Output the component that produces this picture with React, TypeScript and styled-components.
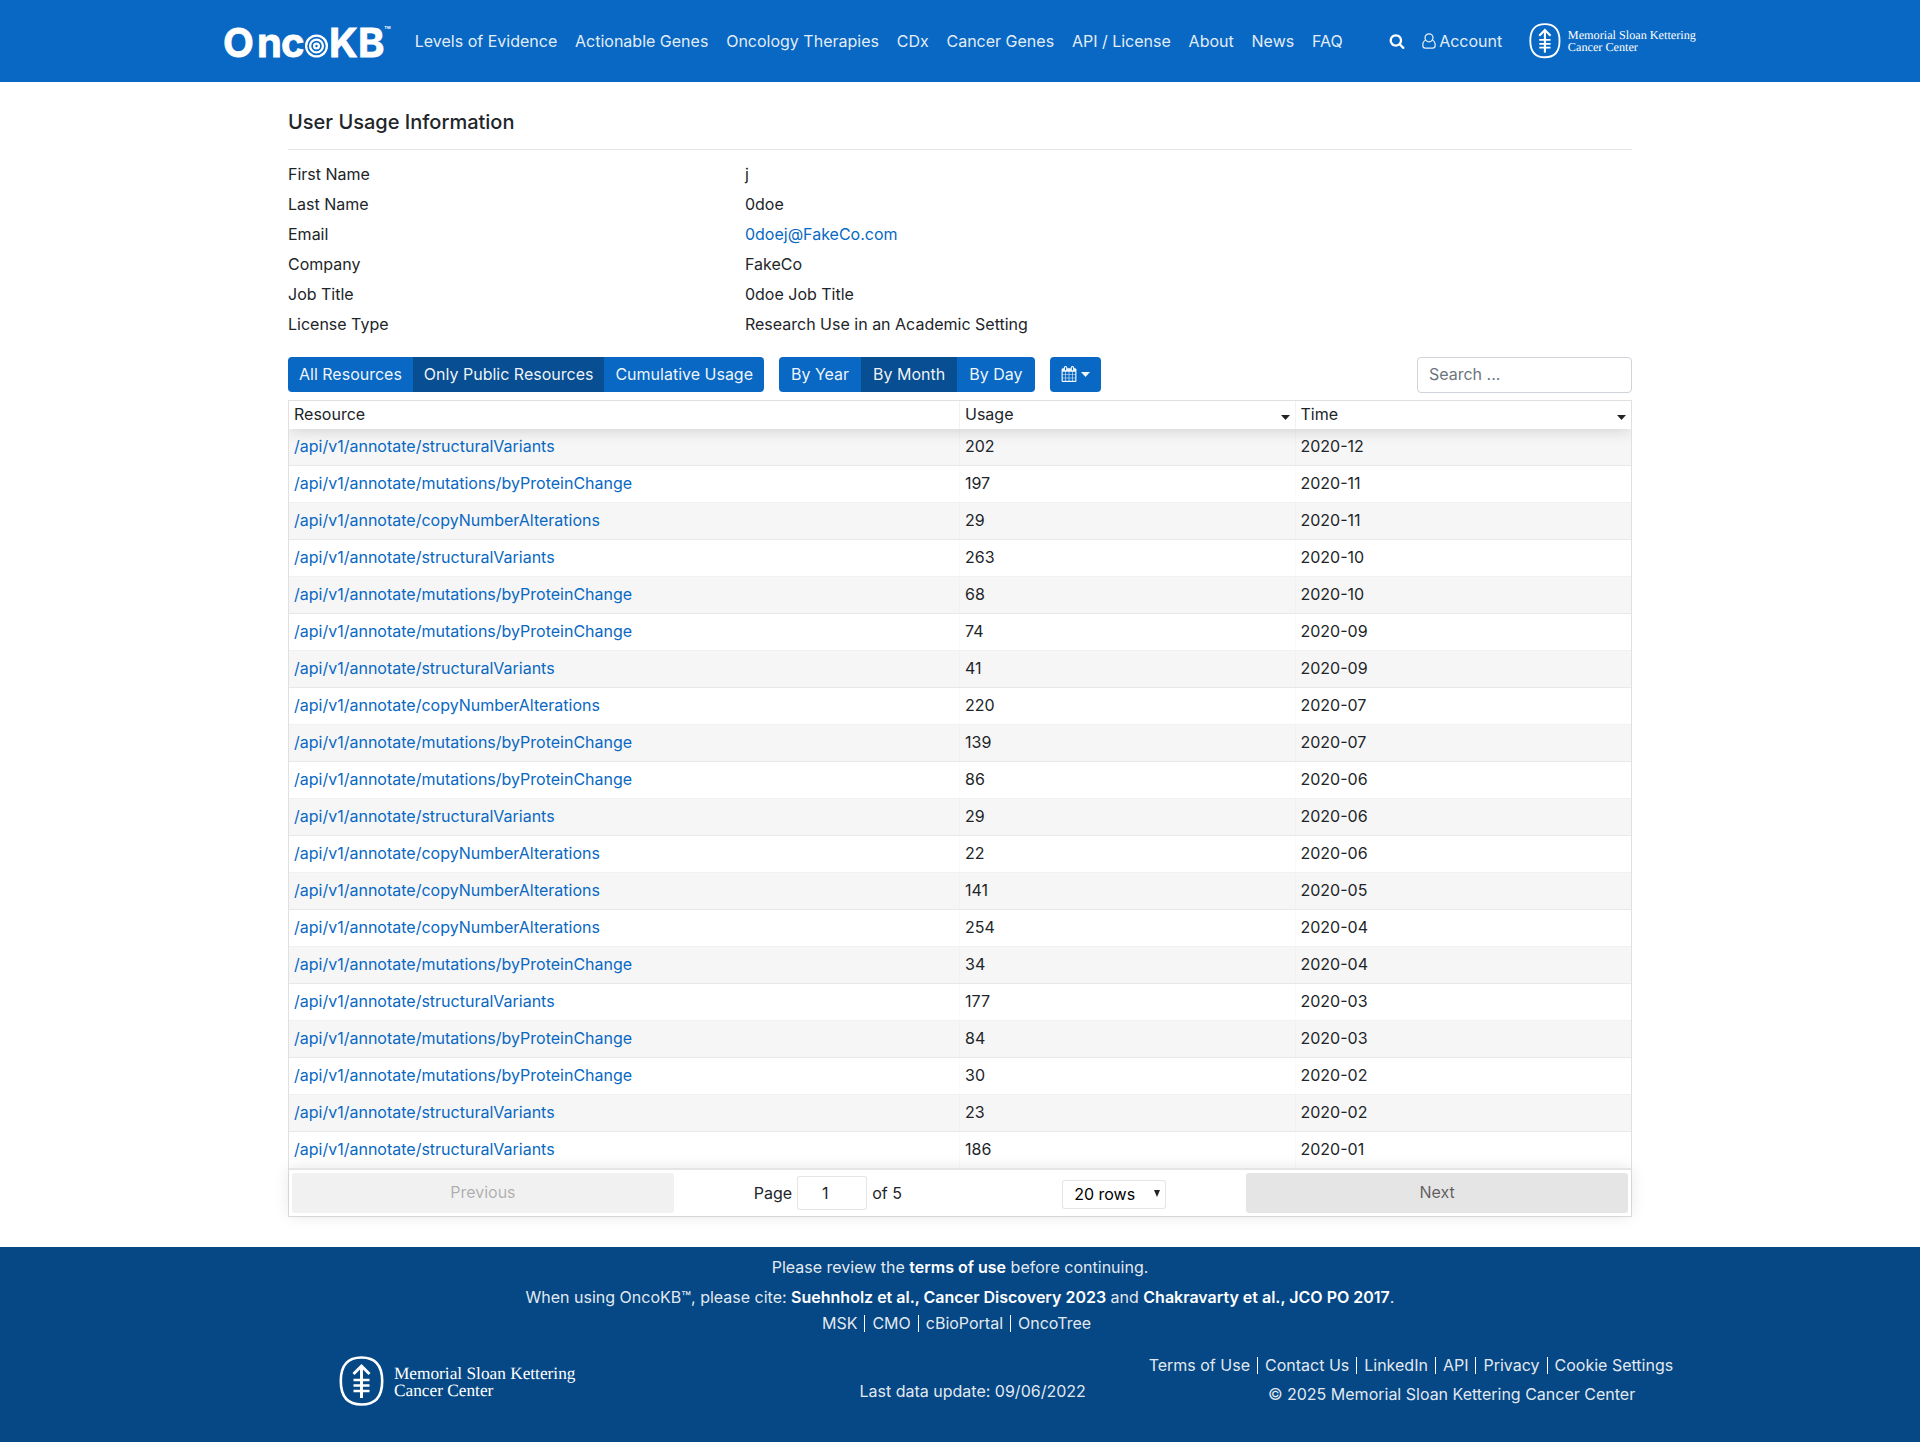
import React, { useState } from 'react';
import styled, { createGlobalStyle } from 'styled-components';

const BLUE = '#0968c3';
const BLUE_DARK = '#084e92';
const FOOTER = '#064885';
const INK = '#212529';

const GlobalStyle = createGlobalStyle`
  *, *::before, *::after { box-sizing: border-box; }
  body {
    margin: 0;
    background: #fff;
    color: ${INK};
    font-family: Inter, "Liberation Sans", sans-serif;
    font-size: 16px;
    line-height: 24px;
  }
  button, input, select { font: inherit; color: inherit; }
  a { color: ${BLUE}; text-decoration: none; }
`;

const Page = styled.div`
  display: flex;
  flex-direction: column;
  min-height: 100vh;
`;

const Header = styled.header`
  background: ${BLUE};
  color: #fff;
`;

const HeaderInner = styled.div`
  display: flex;
  align-items: center;
  width: 77%;
  height: 82px;
  margin: 0 auto;
  padding: 0 2px;
`;

const HomeLink = styled.a`
  display: flex;
  margin-right: 20px;
`;

const Nav = styled.nav`
  display: flex;
  flex: 0 1 928px;
  justify-content: space-between;
  a { color: rgba(255, 255, 255, 0.9); white-space: nowrap; }
`;

const Tools = styled.div`
  display: flex;
  flex: 1;
  align-items: center;
  justify-content: flex-end;
  a { display: flex; align-items: center; gap: 2px; color: rgba(255, 255, 255, 0.9); }
`;

const IconButton = styled.button`
  display: flex;
  padding: 0;
  margin-right: 16px;
  border: 0;
  background: none;
  color: #fff;
`;

const MskLink = styled.a`
  margin-left: 27px;
`;

const Main = styled.main`
  width: 70%;
  margin: 0 auto;
  padding: 28px 0 30px;
`;

const Title = styled.h1`
  margin: 0;
  padding-bottom: 15px;
  border-bottom: 1px solid #e5e5e5;
  font-size: 20px;
  font-weight: 500;
  line-height: 24px;
`;

const Details = styled.dl`
  display: grid;
  grid-template-columns: 34% 1fr;
  row-gap: 6px;
  margin: 12px 0 21px;
  dt, dd { margin: 0; }
`;

const Toolbar = styled.div`
  display: flex;
  align-items: flex-start;
  gap: 15px;
  margin-bottom: 7px;
`;

const ButtonGroup = styled.div`
  display: flex;
  overflow: hidden;
  border-radius: 4px;
`;

const ToolButton = styled.button<{ $active?: boolean; $tight?: boolean }>`
  display: flex;
  align-items: center;
  gap: 4px;
  height: 35px;
  padding: 0 ${(p) => (p.$tight ? 11 : 12)}px 1px;
  border: 0;
  background: ${(p) => (p.$active ? BLUE_DARK : BLUE)};
  color: rgba(255, 255, 255, 0.95);
  white-space: nowrap;
`;

const SearchBox = styled.input`
  width: 16%;
  height: 36px;
  margin-left: auto;
  padding: 0 11px 2px;
  border: 1px solid #ced4da;
  border-radius: 4px;
  background: #fff;
  &::placeholder { color: #6c757d; opacity: 1; }
`;

const TableCard = styled.div`
  border: 1px solid rgba(0, 0, 0, 0.12);
`;

const TableClip = styled.div`
  overflow: hidden;
`;

const Table = styled.table`
  width: 100%;
  table-layout: fixed;
  border-collapse: separate;
  border-spacing: 0;
  thead {
    position: relative;
    z-index: 1;
    background: #fff;
    box-shadow: 0 2px 15px 0 rgba(0, 0, 0, 0.15);
  }
  tbody tr:nth-child(odd) { background: #f6f6f6; }
  tbody tr:last-child td { border-bottom: 0; height: 36px; }
`;

const HeadCell = styled.th<{ $width: string }>`
  width: ${(p) => p.$width};
  height: 28px;
  padding: 0 5px;
  border-right: 1px solid rgba(0, 0, 0, 0.05);
  font-weight: 400;
  text-align: left;
  vertical-align: top;
  &:last-child { border-right: 0; }
`;

const HeadLabel = styled.span`
  display: flex;
  align-items: center;
  justify-content: space-between;
  line-height: 26px;
  svg { margin-top: 6px; }
`;

const Cell = styled.td`
  height: 37px;
  padding: 0 5px 3px;
  border-right: 1px solid rgba(0, 0, 0, 0.02);
  border-bottom: 1px solid rgba(0, 0, 0, 0.05);
  &:last-child { border-right: 0; }
`;

const Pagination = styled.div`
  position: relative;
  z-index: 1;
  display: grid;
  grid-template-columns: 2fr 3fr 2fr;
  align-items: center;
  padding: 3px;
  border-top: 2px solid rgba(0, 0, 0, 0.1);
  background: #fff;
  box-shadow: 0 0 15px 0 rgba(0, 0, 0, 0.1);
`;

const PageButton = styled.button`
  height: 40px;
  padding: 0 0 2px;
  border: 0;
  border-radius: 3px;
  background: rgba(0, 0, 0, 0.1);
  color: rgba(0, 0, 0, 0.6);
  &:disabled { opacity: 0.5; }
`;

const PageCenter = styled.div`
  display: flex;
  align-items: center;
  justify-content: space-around;
`;

const PageLabel = styled.label`
  display: flex;
  align-items: center;
  gap: 5px;
`;

const PageInput = styled.input`
  width: 70px;
  height: 34px;
  padding: 0 14px 0 0;
  border: 1px solid rgba(0, 0, 0, 0.1);
  border-radius: 3px;
  text-align: center;
`;

const SelectWrap = styled.span`
  position: relative;
  display: inline-flex;
  margin-top: 2px;
  svg { position: absolute; right: 6px; top: 10px; pointer-events: none; }
`;

const RowSelect = styled.select`
  width: 104px;
  height: 29px;
  padding: 0 11px;
  border: 1px solid rgba(0, 0, 0, 0.1);
  border-radius: 3px;
  appearance: none;
  background: #fff;
  color: #000;
`;

const Footer = styled.footer`
  flex: 1;
  padding-top: 8px;
  background: ${FOOTER};
  color: rgba(255, 255, 255, 0.9);
  text-align: center;
  a { color: inherit; }
`;

const FooterLine = styled.p`
  margin: 0 0 6px;
  strong { color: #fff; font-weight: 600; }
`;

const LinkList = styled.div`
  display: flex;
  align-items: center;
  justify-content: center;
  white-space: nowrap;
  a { padding: 0 7px; line-height: 17px; border-left: 1px solid #fff; }
  a:first-child { border-left: 0; padding-left: 0; }
`;

const FooterGrid = styled.div`
  display: grid;
  grid-template-columns: 13fr 8fr auto;
  align-items: start;
  width: 77%;
  margin: 0 auto;
  padding: 17px 19px 28px 4px;
`;

const FooterLogo = styled.a`
  display: flex;
  justify-content: flex-start;
  padding: 7px 0 0 20%;
`;

const Updated = styled.div`
  padding-top: 30px;
`;

const FooterLinks = styled.div`
  display: flex;
  flex-direction: column;
  align-items: flex-end;
  gap: 8px;
  padding-top: 8px;
`;

const Copyright = styled.div`
  padding-right: 45px;
`;

const OncoKbLogo = () => (
  <svg width="172" height="50" viewBox="0 0 172 50" fill="#fff" role="img" aria-label="OncoKB">
    <g fontFamily="Inter, sans-serif" fontWeight="700" fontSize="40" stroke="#fff" strokeWidth="0.8">
      <text x="0" y="41">O</text>
      <text x="34" y="41">n</text>
      <text x="58" y="41">c</text>
      <text x="106" y="41">K</text>
      <text x="135" y="41">B</text>
    </g>
    <circle cx="93.500" cy="30" r="11.500" />
    <g fill="none" stroke={BLUE} strokeWidth="1.700">
      <circle cx="93.500" cy="30" r="8.400" />
      <circle cx="93.500" cy="30" r="4.400" />
    </g>
    <circle cx="93.500" cy="30" r="1.200" fill={BLUE} />
    <text x="161" y="18" fontFamily="Inter, sans-serif" fontSize="11" fontWeight="500">™</text>
  </svg>
);

const MskLogo = ({ width, label }: { width: number; label: string }) => (
  <svg width={width} viewBox="0 0 238 50" fill="none" role="img" aria-label={label}>
    <path
      d="M22.500 1.500C36 1.500 43.200 9 43.200 25S36 48.500 22.500 48.500 1.800 41 1.800 25 9 1.500 22.500 1.500z"
      stroke="#fff"
      strokeWidth="2.600"
    />
    <g stroke="#fff" strokeWidth="3">
      <path d="M22.500 10V42" />
      <path d="M14.500 18l8-8 8 8" />
      <path d="M14.500 24h16M14.500 29.500h16M14.500 35h16" strokeWidth="2.400" />
    </g>
    <g fill="#fff" fontFamily='"Liberation Serif", serif' fontSize="17.300" textRendering="geometricPrecision">
      <text x="55" y="23">Memorial Sloan Kettering</text>
      <text x="55" y="40">Cancer Center</text>
    </g>
  </svg>
);

const SearchIcon = () => (
  <svg width="16" height="16" viewBox="0 0 1792 1792" fill="currentColor" aria-hidden="true">
    <path d="M1216 832q0-185-131.500-316.500t-316.500-131.500-316.500 131.500-131.500 316.500 131.500 316.500 316.500 131.500 316.500-131.500 131.500-316.500zm512 832q0 52-38 90t-90 38q-54 0-90-38l-343-342q-179 124-399 124-143 0-273.500-55.500t-225-150-150-225-55.500-273.500 55.500-273.500 150-225 225-150 273.500-55.500 273.500 55.500 225 150 150 225 55.500 273.500q0 220-124 399l343 343q37 37 37 90z" />
  </svg>
);

const UserIcon = () => (
  <svg width="16" height="16" viewBox="0 0 16 16" fill="none" stroke="currentColor" strokeWidth="1.200" aria-hidden="true">
    <circle cx="8" cy="4.800" r="4" />
    <path d="M4.600 7.200C2.600 7.800 1.800 9.800 1.800 12.200c0 1.900 1 3 2.600 3h7.200c1.600 0 2.600-1.100 2.600-3 0-2.400-.8-4.400-2.800-5" />
  </svg>
);

const CalendarIcon = () => (
  <svg width="16" height="16" viewBox="0 0 1792 1792" fill="currentColor" aria-hidden="true">
    <path d="M192 1664h288v-288h-288v288zm352 0h320v-288h-320v288zm-352-352h288v-320h-288v320zm352 0h320v-320h-320v320zm-352-384h288v-288h-288v288zm736 736h320v-288h-320v288zm-384-736h320v-288h-320v288zm768 736h288v-288h-288v288zm-384-352h320v-320h-320v320zm-352-864v-288q0-13-9.500-22.500t-22.500-9.500h-64q-13 0-22.500 9.500t-9.500 22.500v288q0 13 9.500 22.500t22.500 9.500h64q13 0 22.500-9.500t9.500-22.500zm736 864h288v-320h-288v320zm-384-384h320v-288h-320v288zm384 0h288v-288h-288v288zm32-480v-288q0-13-9.500-22.500t-22.500-9.500h-64q-13 0-22.500 9.500t-9.500 22.500v288q0 13 9.500 22.500t22.500 9.500h64q13 0 22.500-9.500t9.500-22.500zm384-64v1280q0 52-38 90t-90 38h-1408q-52 0-90-38t-38-90v-1280q0-52 38-90t90-38h128v-96q0-66 47-113t113-47h64q66 0 113 47t47 113v96h384v-96q0-66 47-113t113-47h64q66 0 113 47t47 113v96h128q52 0 90 38t38 90z" />
  </svg>
);

const Caret = ({ width = 9, height = 5 }: { width?: number; height?: number }) => (
  <svg width={width} height={height} viewBox="0 0 10 5" preserveAspectRatio="none" fill="currentColor" aria-hidden="true">
    <path d="M0 0h10L5 5z" />
  </svg>
);

const NAV = ['Levels of Evidence', 'Actionable Genes', 'Oncology Therapies', 'CDx', 'Cancer Genes', 'API / License', 'About', 'News', 'FAQ'];

const DETAILS: [string, React.ReactNode][] = [
  ['First Name', 'j'],
  ['Last Name', '0doe'],
  ['Email', <a href="mailto:0doej@FakeCo.com">0doej@FakeCo.com</a>],
  ['Company', 'FakeCo'],
  ['Job Title', '0doe Job Title'],
  ['License Type', 'Research Use in an Academic Setting'],
];

const SV = '/api/v1/annotate/structuralVariants';
const PC = '/api/v1/annotate/mutations/byProteinChange';
const CN = '/api/v1/annotate/copyNumberAlterations';

const ROWS: [string, number, string][] = [
  [SV, 202, '2020-12'],
  [PC, 197, '2020-11'],
  [CN, 29, '2020-11'],
  [SV, 263, '2020-10'],
  [PC, 68, '2020-10'],
  [PC, 74, '2020-09'],
  [SV, 41, '2020-09'],
  [CN, 220, '2020-07'],
  [PC, 139, '2020-07'],
  [PC, 86, '2020-06'],
  [SV, 29, '2020-06'],
  [CN, 22, '2020-06'],
  [CN, 141, '2020-05'],
  [CN, 254, '2020-04'],
  [PC, 34, '2020-04'],
  [SV, 177, '2020-03'],
  [PC, 84, '2020-03'],
  [PC, 30, '2020-02'],
  [SV, 23, '2020-02'],
  [SV, 186, '2020-01'],
];

const SCOPES = ['All Resources', 'Only Public Resources', 'Cumulative Usage'];
const PERIODS = ['By Year', 'By Month', 'By Day'];

export default function App() {
  const [scope, setScope] = useState(SCOPES[1]);
  const [period, setPeriod] = useState(PERIODS[1]);

  return (
    <Page>
      <GlobalStyle />
      <Header>
        <HeaderInner>
          <HomeLink href="#"><OncoKbLogo /></HomeLink>
          <Nav>
            {NAV.map((item) => <a key={item} href="#">{item}</a>)}
          </Nav>
          <Tools>
            <IconButton aria-label="Search"><SearchIcon /></IconButton>
            <a href="#"><UserIcon />Account</a>
            <MskLink href="#"><MskLogo width={168} label="Memorial Sloan Kettering Cancer Center" /></MskLink>
          </Tools>
        </HeaderInner>
      </Header>

      <Main>
        <Title>User Usage Information</Title>
        <Details>
          {DETAILS.map(([label, value]) => (
            <React.Fragment key={label}>
              <dt>{label}</dt>
              <dd>{value}</dd>
            </React.Fragment>
          ))}
        </Details>

        <Toolbar>
          <ButtonGroup>
            {SCOPES.map((s) => (
              <ToolButton key={s} $tight $active={s === scope} onClick={() => setScope(s)}>{s}</ToolButton>
            ))}
          </ButtonGroup>
          <ButtonGroup>
            {PERIODS.map((p) => (
              <ToolButton key={p} $active={p === period} onClick={() => setPeriod(p)}>{p}</ToolButton>
            ))}
          </ButtonGroup>
          <ButtonGroup>
            <ToolButton $tight aria-label="Choose dates"><CalendarIcon /><Caret /></ToolButton>
          </ButtonGroup>
          <SearchBox type="text" placeholder="Search ..." aria-label="Search" />
        </Toolbar>

        <TableCard>
          <TableClip>
            <Table>
              <thead>
                <tr>
                  <HeadCell $width="50%"><HeadLabel>Resource</HeadLabel></HeadCell>
                  <HeadCell $width="25%"><HeadLabel>Usage<Caret /></HeadLabel></HeadCell>
                  <HeadCell $width="25%"><HeadLabel>Time<Caret /></HeadLabel></HeadCell>
                </tr>
              </thead>
              <tbody>
                {ROWS.map(([resource, usage, time], i) => (
                  <tr key={i}>
                    <Cell><a href="#">{resource}</a></Cell>
                    <Cell>{usage}</Cell>
                    <Cell>{time}</Cell>
                  </tr>
                ))}
              </tbody>
            </Table>
          </TableClip>
          <Pagination>
            <PageButton disabled>Previous</PageButton>
            <PageCenter>
              <PageLabel>
                Page <PageInput type="text" defaultValue="1" /> of 5
              </PageLabel>
              <SelectWrap>
                <RowSelect aria-label="Rows per page" defaultValue="20">
                  <option value="10">10 rows</option>
                  <option value="20">20 rows</option>
                  <option value="50">50 rows</option>
                </RowSelect>
                <Caret width={6} height={7} />
              </SelectWrap>
            </PageCenter>
            <PageButton>Next</PageButton>
          </Pagination>
        </TableCard>
      </Main>

      <Footer>
        <FooterLine>Please review the <a href="#"><strong>terms of use</strong></a> before continuing.</FooterLine>
        <FooterLine>
          When using OncoKB™, please cite: <a href="#"><strong>Suehnholz et al., Cancer Discovery 2023</strong></a> and{' '}
          <a href="#"><strong>Chakravarty et al., JCO PO 2017</strong></a>.
        </FooterLine>
        <LinkList>
          {['MSK', 'CMO', 'cBioPortal', 'OncoTree'].map((l) => <a key={l} href="#">{l}</a>)}
        </LinkList>
        <FooterGrid>
          <FooterLogo href="#"><MskLogo width={238} label="Memorial Sloan Kettering Cancer Center" /></FooterLogo>
          <Updated>Last data update: 09/06/2022</Updated>
          <FooterLinks>
            <LinkList>
              {['Terms of Use', 'Contact Us', 'LinkedIn', 'API', 'Privacy', 'Cookie Settings'].map((l) => <a key={l} href="#">{l}</a>)}
            </LinkList>
            <Copyright>© 2025 Memorial Sloan Kettering Cancer Center</Copyright>
          </FooterLinks>
        </FooterGrid>
      </Footer>
    </Page>
  );
}
